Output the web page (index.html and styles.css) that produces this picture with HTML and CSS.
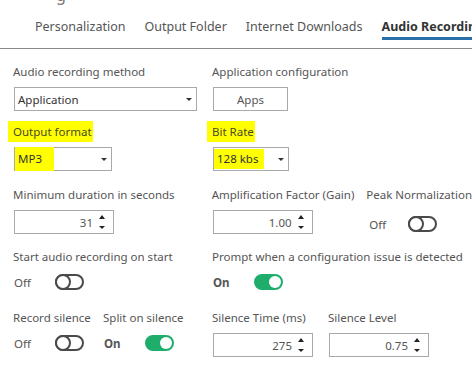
FILE: index.html
```html
<!DOCTYPE html>
<html lang="en">
<head>
    <meta charset="UTF-8">
    <title>Settings - Audio Recording</title>
    <link rel="stylesheet" href="styles.css">
</head>
<body>
    <div class="title-stub">g</div>

    <div class="tabs">
        <span class="tab">Personalization</span>
        <span class="tab">Output Folder</span>
        <span class="tab">Internet Downloads</span>
        <span class="tab active">Audio Recording</span>
    </div>

    <div class="content">
        <div class="row row-1">
            <div class="field w-method">
                <div class="label">Audio recording method</div>
                <div class="select wide">
                    <span>Application</span>
                    <span class="caret"></span>
                </div>
            </div>
            <div class="field">
                <div class="label">Application configuration</div>
                <div class="button">Apps</div>
            </div>
        </div>

        <div class="row row-2">
            <div class="field w-method">
                <div class="label"><span class="mark mark-label">Output format</span></div>
                <div class="select small">
                    <span class="mark mark-value">MP3</span>
                    <span class="caret"></span>
                </div>
            </div>
            <div class="field">
                <div class="label"><span class="mark mark-label">Bit Rate</span></div>
                <div class="select rate">
                    <span class="mark mark-value rate-mark">128 kbs</span>
                    <span class="caret"></span>
                </div>
            </div>
        </div>

        <div class="row row-3">
            <div class="field w-method">
                <div class="label">Minimum duration in seconds</div>
                <div class="spin">
                    <span class="value">31</span>
                    <span class="arrows"><i class="up"></i><i class="down"></i></span>
                </div>
            </div>
            <div class="field w-gain">
                <div class="label">Amplification Factor (Gain)</div>
                <div class="spin">
                    <span class="value">1.00</span>
                    <span class="arrows"><i class="up"></i><i class="down"></i></span>
                </div>
            </div>
            <div class="field">
                <div class="label">Peak Normalization</div>
                <div class="toggle-row peak">
                    <span class="state">Off</span>
                    <span class="toggle"></span>
                </div>
            </div>
        </div>

        <div class="row row-4">
            <div class="field w-method">
                <div class="label">Start audio recording on start</div>
                <div class="toggle-row">
                    <span class="state">Off</span>
                    <span class="toggle"></span>
                </div>
            </div>
            <div class="field">
                <div class="label">Prompt when a configuration issue is detected</div>
                <div class="toggle-row">
                    <span class="state on-text">On</span>
                    <span class="toggle on"></span>
                </div>
            </div>
        </div>

        <div class="row row-5">
            <div class="field w-record">
                <div class="label">Record silence</div>
                <div class="toggle-row">
                    <span class="state">Off</span>
                    <span class="toggle"></span>
                </div>
            </div>
            <div class="field w-split">
                <div class="label">Split on silence</div>
                <div class="toggle-row">
                    <span class="state on-text">On</span>
                    <span class="toggle on"></span>
                </div>
            </div>
            <div class="field w-time">
                <div class="label">Silence Time (ms)</div>
                <div class="spin">
                    <span class="value">275</span>
                    <span class="arrows"><i class="up"></i><i class="down"></i></span>
                </div>
            </div>
            <div class="field">
                <div class="label">Silence Level</div>
                <div class="spin">
                    <span class="value">0.75</span>
                    <span class="arrows"><i class="up"></i><i class="down"></i></span>
                </div>
            </div>
        </div>
    </div>
</body>
</html>
```

FILE: styles.css
```css
body {
    margin: 0;
    width: 472px;
    height: 377px;
    overflow: hidden;
    background-color: #fff;
    font-family: "Noto Sans", "Open Sans", sans-serif;
    font-size: 11.5px;
    color: #555;
}
.title-stub {
    height: 12px;
    margin-top: -12px;
    padding-left: 56px;
    font-size: 16px;
    line-height: 14px;
    color: #777;
}
.tabs {
    display: flex;
    gap: 19px;
    height: 49px;
    padding-left: 35px;
    box-sizing: border-box;
    border-bottom: 1px solid #8a8a8a;
    white-space: nowrap;
    overflow: hidden;
}
.tab {
    font-size: 12.5px;
    line-height: 20px;
    padding-top: 17px;
    height: 40px;
    box-sizing: border-box;
    color: #555;
}
.tab.active {
    font-weight: bold;
    color: #333;
    border-bottom: 3px solid #2a6fa9;
}
.content {
    padding-left: 13px;
}
.row {
    display: flex;
}
.row-1 { margin-top: 15px; }
.row-2 { margin-top: 13px; }
.row-3 { margin-top: 16px; }
.row-4 { margin-top: 15px; }
.row-5 { margin-top: 20px; }
.field {
    display: flex;
    flex-direction: column;
}
.w-method { width: 199px; }
.w-gain { width: 155px; }
.w-record { width: 90px; }
.w-split { width: 109px; }
.w-time { width: 116px; }
.label {
    height: 16px;
    line-height: 16px;
    margin-bottom: 7px;
    white-space: nowrap;
}
.select, .button, .spin {
    height: 24px;
    box-sizing: border-box;
    border: 1px solid #a9a9a9;
    display: flex;
    align-items: center;
    margin-left: 1px;
}
.select {
    justify-content: space-between;
    padding: 0 4px 0 3px;
    color: #333;
}
.select.wide { width: 183px; }
.select.small { width: 98px; }
.select.rate { width: 76px; }
.caret {
    width: 0;
    height: 0;
    border-left: 3px solid transparent;
    border-right: 3px solid transparent;
    border-top: 3px solid #333;
}
.button {
    width: 75px;
    justify-content: center;
    color: #555;
}
.spin {
    width: 100px;
    justify-content: flex-end;
    padding-right: 8px;
    color: #555;
}
.spin .value {
    margin-right: 6px;
}
.arrows {
    display: flex;
    flex-direction: column;
    gap: 7px;
}
.arrows i {
    width: 0;
    height: 0;
    border-left: 3px solid transparent;
    border-right: 3px solid transparent;
}
.arrows .up { border-bottom: 4px solid #222; }
.arrows .down { border-top: 3px solid #222; }
.mark {
    background-color: #ffff00;
}
.mark-label {
    margin-left: -5px;
    padding: 3px 1px 3px 5px;
    color: #4a4a2a;
}
.mark-value {
    margin-left: -3px;
    padding: 4px 12px 4px 3px;
    color: #333;
    line-height: 16px;
}
.rate-mark {
    padding: 2px 6px 2px 3px;
}
.toggle-row {
    display: flex;
    align-items: center;
    height: 16px;
    margin-top: 2px;
    padding-left: 1px;
}
.toggle-row .state {
    width: 41px;
}
.peak {
    margin-top: 6px;
    padding-left: 3px;
}
.peak .state {
    width: 39px;
}
.state.on-text {
    font-weight: bold;
    color: #555;
}
.toggle {
    position: relative;
    width: 29px;
    height: 16px;
    box-sizing: border-box;
    border: 2px solid #4a4a4a;
    border-radius: 8px;
}
.toggle::after {
    content: "";
    position: absolute;
    left: -2px;
    top: -2px;
    width: 16px;
    height: 16px;
    box-sizing: border-box;
    border: 2px solid #4a4a4a;
    border-radius: 50%;
    background-color: #fff;
}
.toggle.on {
    background-color: #1fad6b;
    border-color: #1fad6b;
}
.toggle.on::after {
    left: auto;
    right: 0;
    top: 0;
    width: 12px;
    height: 12px;
    border: none;
}
```
